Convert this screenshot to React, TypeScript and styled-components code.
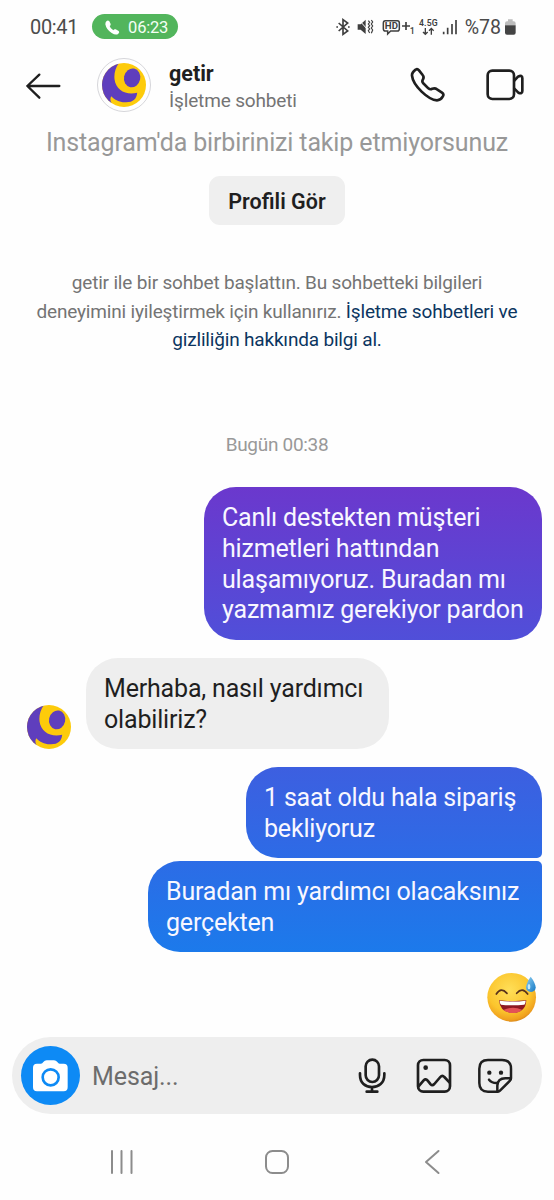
import React from 'react';
import styled, { createGlobalStyle } from 'styled-components';

const GlobalStyle = createGlobalStyle`
  * { box-sizing: border-box; }
  body { margin: 0; background: #fefefe; font-family: Roboto, "Noto Sans", sans-serif; color: #1f1f1f; }
  svg { display: block; flex: none; overflow: visible; }
`;

const Screen = styled.main`
  width: 554px;
  height: 1200px;
  display: flex;
  flex-direction: column;
  background: #fefefe;
  overflow: hidden;
`;

/* Text run with fixed metrics */
const Label = styled.span<{ $size: number; $color?: string; $weight?: number; $track?: number }>`
  font-size: ${(p) => p.$size}px;
  color: ${(p) => p.$color ?? '#1f1f1f'};
  font-weight: ${(p) => p.$weight ?? 400};
  letter-spacing: ${(p) => p.$track ?? 0}px;
  white-space: nowrap;
`;

const StatusBar = styled.header`
  height: 53px;
  padding: 0 39px 0 30px;
  display: flex;
  align-items: center;
  justify-content: space-between;
`;

const StatusGroup = styled.div`
  display: flex;
  align-items: center;
  gap: 14px;
`;

const CallPill = styled.div`
  width: 86px;
  height: 25px;
  border-radius: 13px;
  background: #52b55c;
  display: flex;
  align-items: center;
  gap: 8px;
  padding: 1px 0 0 13px;
`;

const ChatHeader = styled.header`
  height: 65px;
  display: flex;
  align-items: center;
  padding: 0 30px 0 26px;
`;

const AvatarRing = styled.div`
  width: 54px;
  height: 54px;
  margin: -2px 18px 0 36px;
  border: 1px solid #d6d6da;
  border-radius: 50%;
  display: flex;
  align-items: center;
  justify-content: center;
`;

const TitleBlock = styled.div`
  flex: 1;
  display: flex;
  flex-direction: column;
  gap: 3px;
  line-height: 24px;
  padding-top: 3px;
`;

const HeaderActions = styled.div`
  display: flex;
  align-items: center;
  gap: 40px;
  margin-top: -1px;
`;

const Intro = styled.section`
  display: flex;
  flex-direction: column;
  align-items: center;
  height: 369px;
  padding-top: 10px;
  line-height: 30px;
`;

const ProfileButton = styled.button`
  width: 136px;
  height: 49px;
  margin-top: 18px;
  border: 0;
  border-radius: 11px;
  background: #efefef;
  font-family: inherit;
  padding: 2px 0 0;
`;

const Notice = styled.p`
  margin: 44px 0 0;
  text-align: center;
  font-size: 19px;
  line-height: 28.7px;
`;

const Timestamp = styled.div`
  margin-top: 75px;
  font-size: 19px;
`;

const Thread = styled.section`
  height: 550px;
  padding: 0 12px 0 27px;
  display: flex;
  flex-direction: column;
`;

const MessageRow = styled.div<{ $own?: boolean; $top?: number; $inset?: number }>`
  display: flex;
  align-items: flex-end;
  justify-content: ${(p) => (p.$own ? 'flex-end' : 'flex-start')};
  gap: 15px;
  margin-top: ${(p) => p.$top ?? 0}px;
  padding-right: ${(p) => p.$inset ?? 0}px;
`;

const Bubble = styled.div<{ $w: number; $h: number; $bg: string; $radius?: string; $color?: string }>`
  width: ${(p) => p.$w}px;
  height: ${(p) => p.$h}px;
  padding: 16px 0 0 18px;
  border-radius: ${(p) => p.$radius ?? '32px'};
  background: ${(p) => p.$bg};
  color: ${(p) => p.$color ?? '#f8f7ff'};
  font-size: 25px;
  letter-spacing: -0.18px;
  line-height: 30.8px;
  white-space: nowrap;
`;

const Composer = styled.section`
  width: 530px;
  height: 77px;
  margin-left: 12px;
  border-radius: 39px;
  background: #eeeeee;
  display: flex;
  align-items: center;
  padding: 0 29px 0 9px;

  > span { padding-top: 2px; }
`;

const CameraButton = styled.div`
  width: 59px;
  height: 59px;
  border-radius: 50%;
  background: #0d8af5;
  display: flex;
  align-items: center;
  justify-content: center;
  margin-right: 12px;
`;

const ComposerTools = styled.div`
  margin-left: auto;
  display: flex;
  align-items: center;
  gap: 25.5px;

  svg:first-child { margin-right: 4.5px; }
`;

const NavBar = styled.nav`
  height: 86px;
  padding: 10px 113px 0 109px;
  display: flex;
  align-items: center;
  justify-content: space-between;

  svg:nth-child(2) { margin-right: 5px; }
`;

const Logo = ({ size }: { size: number }) => (
  <svg width={size} height={size} viewBox="0 0 130 130">
    <defs>
      <clipPath id="disc"><circle cx="65" cy="65" r="65" /></clipPath>
    </defs>
    <g clipPath="url(#disc)">
      <rect width="130" height="130" fill="#fdcb0a" />
      <path d="M-5-5H54C40 12 35 30 37 48C41 80 72 97 104 88C102 107 92 117 68 116C50 116 38 108 27 98C24 106 24 112 28 118L-5 130Z" fill="#5f3ebd" />
      <ellipse cx="89" cy="44" rx="24" ry="28" transform="rotate(12 89 44)" fill="#5f3ebd" />
    </g>
  </svg>
);

const stroke = { fill: 'none', stroke: '#1f1f1f', strokeWidth: 8, strokeLinecap: 'round', strokeLinejoin: 'round' } as const;

const BackArrow = () => (
  <svg width="35" height="28" viewBox="78 216 105 84"><path d="M178 258H82M118 224L82 258L118 293" {...stroke} strokeWidth="7" /></svg>
);
const PhoneOutline = () => (
  <svg width="36" height="36" viewBox="90 50 108 108">
    <path d="M107 58Q112 54 117 60L128 74Q133 80 129 87Q125 93 129 98L145 114Q151 119 157 115Q165 112 171 117L186 127Q193 132 188 139Q182 150 171 150C145 149 99 106 96 76Q95 67 107 58Z" {...stroke} />
  </svg>
);
const VideoOutline = () => (
  <svg width="38" height="34" viewBox="318 54 114 102">
    <rect x="323" y="62" width="79" height="85" rx="14" {...stroke} />
    <path d="M403 92L414 80Q427 73 427 85V123Q427 133 415 128L403 116" {...stroke} />
  </svg>
);
const CallGlyph = () => (
  <svg width="15" height="15" viewBox="0 0 45 45">
    <path d="M5 3Q9-1 13 4L17 12Q18 16 14 18Q16 26 25 31Q28 26 32 28L41 33Q45 36 40 41Q33 47 20 39Q4 29 1 13Q1 6 5 3Z" fill="#fff" />
  </svg>
);
const StatusGlyphs = () => (
  <svg width="180" height="30" viewBox="45 35 540 90" fill="none" stroke="#3f3f3f" fontFamily="Roboto, sans-serif">
    <path d="M56 68L83 92L69 102V58L83 68L56 92" strokeWidth="5" />
    <path d="M49 80H54M84 80H89" strokeWidth="5" />
    <path d="M113 72H122L137 58V101L122 88H113Z" fill="#3f3f3f" stroke="none" />
    <path d="M117 59L151 97" stroke="#fefefe" strokeWidth="3" />
    <path d="M145 61L149 66L145 71L149 76L145 81L149 86L145 91L149 98M154 59L158 65L154 71L158 77L154 83L158 89L154 99" strokeWidth="3.5" />
    <path d="M196 61H232Q238 61 238 68V85Q238 92 232 92H212L203 101V92H196Q190 92 190 85V68Q190 61 196 61Z" strokeWidth="4.5" />
    <text x="194" y="87" fontSize="29" fontWeight="700" fill="#3f3f3f" stroke="none" textLength="40">HD</text>
    <path d="M246 77H270M258 65V89" strokeWidth="5" />
    <text x="269" y="102" fontSize="27" fontWeight="500" fill="#3f3f3f" stroke="none">1</text>
    <text x="297" y="77" fontSize="26" fontWeight="600" fill="#3f3f3f" stroke="none" textLength="56">4.5G</text>
    <path d="M316 83V102M309 95L316 102L323 95M334 103V84M327 91L334 84L341 91" strokeWidth="4" />
    <path d="M371 94V102M383 82V102M396 71V102M408 59V102" strokeWidth="5" />
    <text x="434" y="102" fontSize="59" fill="#4a4a4a" stroke="none" textLength="109" lengthAdjust="spacingAndGlyphs">%78</text>
    <path d="M564 63V57H578V63H581Q587 63 587 69V75H555V69Q555 63 561 63Z" fill="#bdbdbd" stroke="none" />
    <path d="M555 75H587V97Q587 103 581 103H561Q555 103 555 97Z" fill="#444" stroke="none" />
  </svg>
);
const CameraGlyph = () => (
  <svg width="35" height="32" viewBox="100 98 105 96">
    <path d="M112 109H124Q128 109 131 104Q135 99 141 99H163Q169 99 173 104Q176 109 180 109H192Q204 109 204 121V180Q204 192 192 192H112Q100 192 100 180V121Q100 109 112 109Z" fill="#fff" />
    <circle cx="153" cy="150" r="24" fill="none" stroke="#0d8af5" strokeWidth="8" />
  </svg>
);
const MicGlyph = () => (
  <svg width="28" height="36" viewBox="244 97 84 108">
    <rect x="267" y="102" width="40" height="67" rx="20" {...stroke} />
    <path d="M250 143V148C250 172 266 184 286 184S323 172 323 148V143M286 184V197M270 198H302" {...stroke} />
  </svg>
);
const ImageGlyph = () => (
  <svg width="36" height="36" viewBox="417 97 108 108">
    <rect x="423" y="103" width="96" height="95" rx="16" {...stroke} />
    <circle cx="446" cy="126" r="7" fill="#1f1f1f" />
    <path d="M424 183L440 164Q446 158 452 165L461 176Q466 181 472 175L490 154Q496 147 502 154L518 171" {...stroke} />
  </svg>
);
const StickerGlyph = () => (
  <svg width="36" height="36" viewBox="601 97 108 108">
    <path d="M664 198H634Q608 198 608 172V129Q608 103 634 103H676Q703 103 703 129V158Q703 162 700 165L670 195Q667 198 664 198ZM662 196V180Q663 158 686 158H701" {...stroke} strokeWidth="7.5" />
    <circle cx="638" cy="141" r="6.5" fill="#1f1f1f" />
    <circle cx="673" cy="141" r="6.5" fill="#1f1f1f" />
    <path d="M637 162Q646 173 662 172" {...stroke} strokeWidth="7.5" />
  </svg>
);

const SweatSmile = () => (
  <svg width="52" height="52" viewBox="50 36 156 156">
    <defs>
      <radialGradient id="face" cx="0.45" cy="0.35" r="0.68">
        <stop offset="0" stopColor="#ffdf58" />
        <stop offset="0.65" stopColor="#fbc52d" />
        <stop offset="0.9" stopColor="#f0a01e" />
        <stop offset="1" stopColor="#cf7d18" />
      </radialGradient>
      <linearGradient id="drop" x1="0" y1="0" x2="1" y2="1">
        <stop offset="0" stopColor="#8fd0f3" />
        <stop offset="1" stopColor="#1478c4" />
      </linearGradient>
    </defs>
    <circle cx="124" cy="112" r="73" fill="url(#face)" />
    <path d="M78 102Q92 80 110 100M139 100Q156 80 172 102" fill="none" stroke="#59331b" strokeWidth="5" strokeLinecap="round" />
    <path d="M86 121Q126 126 168 121Q166 158 127 159Q89 158 86 121Z" fill="#8d1822" />
    <path d="M88 122Q126 127 166 122Q165 133 161 134Q126 138 92 134Q88 132 88 122Z" fill="#fff" />
    <path d="M99 150Q127 137 155 149Q145 159 127 159Q109 159 99 150Z" fill="#e35256" />
    <path d="M181 50Q195 68 196 82Q196 95 182 96Q167 95 167 82Q168 68 181 50Z" fill="url(#drop)" />
    <ellipse cx="176" cy="80" rx="4" ry="8" fill="#c4e9fb" />
  </svg>
);

const navStroke = { fill: 'none', stroke: '#8c8c8c', strokeWidth: 2, strokeLinecap: 'round', strokeLinejoin: 'round' } as const;

export default function App() {
  return (
    <Screen>
      <GlobalStyle />
      <StatusBar>
        <StatusGroup>
          <Label $size={20} $color="#4c4c4c" $track={-0.35}>00:41</Label>
          <CallPill>
            <CallGlyph />
            <Label $size={16.5} $color="#f4fff4" $track={-0.2}>06:23</Label>
          </CallPill>
        </StatusGroup>
        <StatusGlyphs />
      </StatusBar>

      <ChatHeader>
        <BackArrow />
        <AvatarRing><Logo size={44} /></AvatarRing>
        <TitleBlock>
          <Label $size={21.5} $weight={700}>getir</Label>
          <Label $size={19} $color="#747474" $track={-0.15}>İşletme sohbeti</Label>
        </TitleBlock>
        <HeaderActions><PhoneOutline /><VideoOutline /></HeaderActions>
      </ChatHeader>

      <Intro>
        <Label $size={25} $color="#989898" $track={-0.14}>Instagram'da birbirinizi takip etmiyorsunuz</Label>
        <ProfileButton><Label $size={21.5} $weight={600}>Profili Gör</Label></ProfileButton>
        <Notice>
          <Label $size={19} $color="#747474" $track={-0.18}>getir ile bir sohbet başlattın. Bu sohbetteki bilgileri</Label><br />
          <Label $size={19} $color="#747474" $track={-0.18}>deneyimini iyileştirmek için kullanırız. </Label>
          <Label $size={19} $color="#0b3560" $track={-0.16}>İşletme sohbetleri ve</Label><br />
          <Label $size={19} $color="#0b3560" $track={-0.18}>gizliliğin hakkında bilgi al.</Label>
        </Notice>
        <Timestamp><Label $size={19} $color="#999" $track={-0.3}>Bugün 00:38</Label></Timestamp>
      </Intro>

      <Thread>
        <MessageRow $own>
          <Bubble $w={338} $h={153} $bg="linear-gradient(#6b38cd, #504fd9)">
            Canlı destekten müşteri<br />hizmetleri hattından<br />ulaşamıyoruz. Buradan mı<br />yazmamız gerekiyor pardon
          </Bubble>
        </MessageRow>
        <MessageRow $top={18}>
          <Logo size={44} />
          <Bubble $w={303} $h={91} $bg="#eeeeee" $color="#1f1f1f">
            Merhaba, nasıl yardımcı<br />olabiliriz?
          </Bubble>
        </MessageRow>
        <MessageRow $own $top={18}>
          <Bubble $w={296} $h={91} $bg="linear-gradient(#3d5fe0, #2d6be6)" $radius="32px 32px 5px 32px">
            1 saat oldu hala sipariş<br />bekliyoruz
          </Bubble>
        </MessageRow>
        <MessageRow $own $top={3}>
          <Bubble $w={394} $h={91} $bg="linear-gradient(#2c6ce6, #1c7aeb)" $radius="32px 5px 32px 32px">
            Buradan mı yardımcı olacaksınız<br />gerçekten
          </Bubble>
        </MessageRow>
        <MessageRow $own $top={20} $inset={3}><SweatSmile /></MessageRow>
      </Thread>

      <Composer>
        <CameraButton><CameraGlyph /></CameraButton>
        <Label $size={25} $color="#6c6c6c" $track={-0.1}>Mesaj...</Label>
        <ComposerTools><MicGlyph /><ImageGlyph /><StickerGlyph /></ComposerTools>
      </Composer>

      <NavBar>
        <svg width="26" height="26" viewBox="0 0 26 26"><path d="M3 2V24M12.5 2V24M22.5 2V24" {...navStroke} /></svg>
        <svg width="26" height="26" viewBox="0 0 26 26"><rect x="2" y="2" width="22" height="22" rx="6.5" {...navStroke} /></svg>
        <svg width="18" height="26" viewBox="0 0 18 26"><path d="M15.500 2L3 13L15.500 24" {...navStroke} /></svg>
      </NavBar>
    </Screen>
  );
}
